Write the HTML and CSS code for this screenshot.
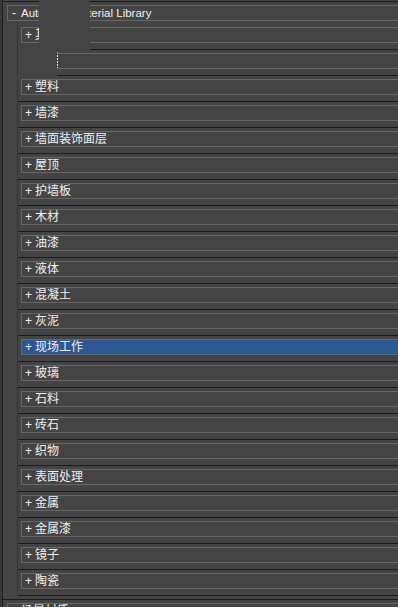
FILE: index.html
```html
<!DOCTYPE html>
<html lang="zh">
<head>
<meta charset="utf-8">
<link rel="stylesheet" href="styles.css">
</head>
<body>
<div class="panel">
  <div class="rollout">
    <div class="rhead"><span class="sign">-</span><span class="latin">Autodesk Material Library</span></div>
    <div class="group">
      <div class="item"><div class="ihead"><span class="sign">+</span>其他</div></div>
      <div class="item"><div class="ihead"><span class="sign">+</span></div></div>
      <div class="item"><div class="ihead"><span class="sign">+</span>塑料</div></div>
      <div class="item"><div class="ihead"><span class="sign">+</span>墙漆</div></div>
      <div class="item"><div class="ihead"><span class="sign">+</span>墙面装饰面层</div></div>
      <div class="item"><div class="ihead"><span class="sign">+</span>屋顶</div></div>
      <div class="item"><div class="ihead"><span class="sign">+</span>护墙板</div></div>
      <div class="item"><div class="ihead"><span class="sign">+</span>木材</div></div>
      <div class="item"><div class="ihead"><span class="sign">+</span>油漆</div></div>
      <div class="item"><div class="ihead"><span class="sign">+</span>液体</div></div>
      <div class="item"><div class="ihead"><span class="sign">+</span>混凝土</div></div>
      <div class="item"><div class="ihead"><span class="sign">+</span>灰泥</div></div>
      <div class="item"><div class="ihead selected"><span class="sign">+</span>现场工作</div></div>
      <div class="item"><div class="ihead"><span class="sign">+</span>玻璃</div></div>
      <div class="item"><div class="ihead"><span class="sign">+</span>石料</div></div>
      <div class="item"><div class="ihead"><span class="sign">+</span>砖石</div></div>
      <div class="item"><div class="ihead"><span class="sign">+</span>织物</div></div>
      <div class="item"><div class="ihead"><span class="sign">+</span>表面处理</div></div>
      <div class="item"><div class="ihead"><span class="sign">+</span>金属</div></div>
      <div class="item"><div class="ihead"><span class="sign">+</span>金属漆</div></div>
      <div class="item"><div class="ihead"><span class="sign">+</span>镜子</div></div>
      <div class="item"><div class="ihead"><span class="sign">+</span>陶瓷</div></div>
    </div>
  </div>
  <div class="rollout">
    <div class="rhead"><span class="sign">+</span>场景材质</div>
  </div>
</div>
<div class="ghost ghost-a"></div>
<div class="ghost ghost-b"></div>
<div class="focus-dot"></div>
<div class="focus-line"></div>
</body>
</html>
```
FILE: styles.css
```css
html, body {
  margin: 0;
  padding: 0;
}
body {
  width: 398px;
  height: 607px;
  overflow: hidden;
  background: #3a3636;
  position: relative;
  font-family: "Liberation Sans", "Noto Sans CJK SC", sans-serif;
  font-size: 12px;
  color: #f0f0f0;
}
.panel {
  margin-left: 2px;
  border-left: 1px solid #222;
  background: #444;
  padding-top: 1px;
  min-height: 606px;
}
.rollout {
  border-top: 1px solid #1c1c1c;
  padding: 3px 0 3px 0;
}
.rhead {
  margin-left: 4px;
  margin-right: -40px;
  height: 14px;
  border: 1px solid #676767;
  display: flex;
  align-items: center;
  padding-left: 4px;
  line-height: 14px;
  white-space: nowrap;
}
.latin {
  font-size: 11.5px;
}
.sign {
  display: inline-block;
  width: 9px;
  font-size: 12px;
}
.group {
  margin-left: 14px;
  border-left: 1px solid #363636;
  padding-top: 3px;
}
.item {
  padding: 3px 0 6px 3px;
  border-bottom: 1px solid #1c1c1c;
}
.ihead {
  height: 14px;
  margin-right: -40px;
  border: 1px solid #676767;
  display: flex;
  align-items: center;
  padding-left: 3px;
  line-height: 14px;
  white-space: nowrap;
}
.ihead .sign {
  width: 10px;
}
.ihead.selected {
  background: #2c5896;
}
.ghost {
  position: absolute;
  background: #444;
}
.ghost-a {
  left: 39px;
  top: 0;
  width: 51px;
  height: 50px;
}
.ghost-b {
  left: 18px;
  top: 49px;
  width: 39px;
  height: 27px;
}
.focus-dot {
  position: absolute;
  left: 57px;
  top: 52px;
  width: 1px;
  height: 2px;
  background: #3fd23f;
}
.focus-line {
  position: absolute;
  left: 57px;
  top: 55px;
  width: 1px;
  height: 13px;
  background: repeating-linear-gradient(to bottom, #dcdcdc 0 2px, transparent 2px 3px);
}
```
